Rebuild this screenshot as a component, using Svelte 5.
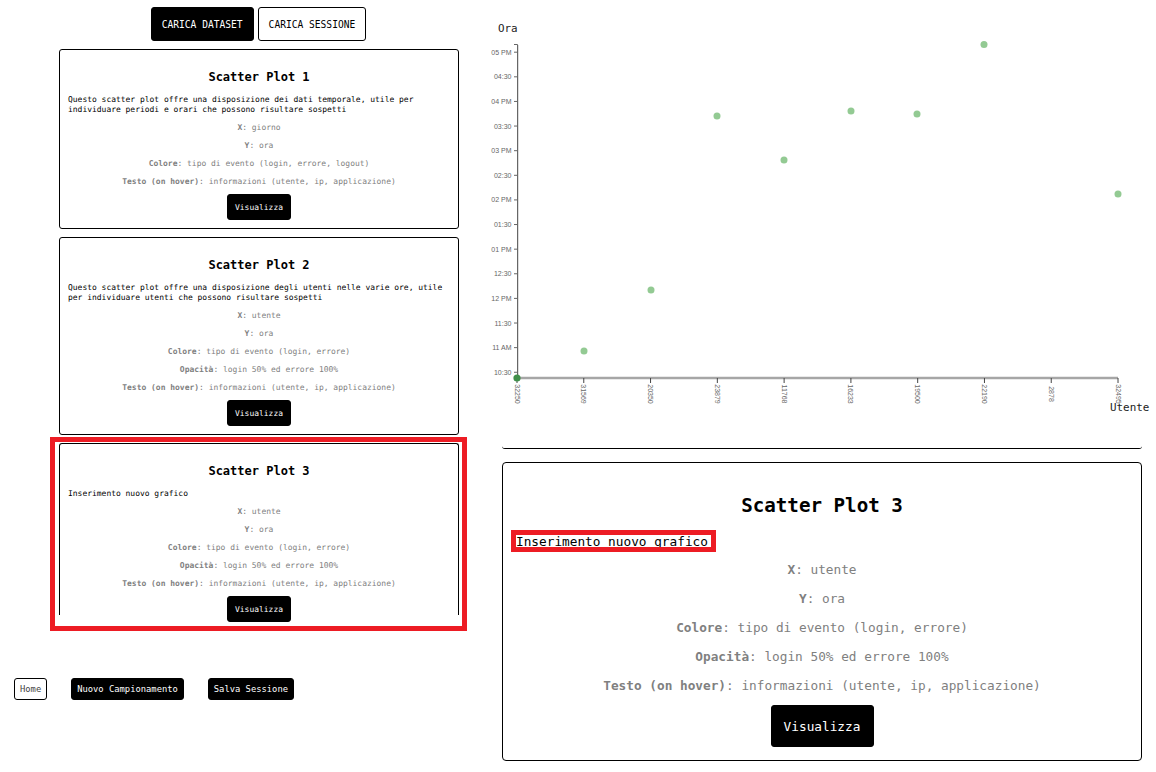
<script>
  const plots = [
    {
      title: 'Scatter Plot 1',
      text: 'Questo scatter plot offre una disposizione dei dati temporale, utile per individuare periodi e orari che possono risultare sospetti',
      rows: [['X', 'giorno'], ['Y', 'ora'], ['Colore', 'tipo di evento (login, errore, logout)'], ['Testo (on hover)', 'informazioni (utente, ip, applicazione)']]
    },
    {
      title: 'Scatter Plot 2',
      text: 'Questo scatter plot offre una disposizione degli utenti nelle varie ore, utile per individuare utenti che possono risultare sospetti',
      rows: [['X', 'utente'], ['Y', 'ora'], ['Colore', 'tipo di evento (login, errore)'], ['Opacità', 'login 50% ed errore 100%'], ['Testo (on hover)', 'informazioni (utente, ip, applicazione)']]
    }
  ];
  const third = {
    title: 'Scatter Plot 3',
    text: 'Inserimento nuovo grafico',
    rows: [['X', 'utente'], ['Y', 'ora'], ['Colore', 'tipo di evento (login, errore)'], ['Opacità', 'login 50% ed errore 100%'], ['Testo (on hover)', 'informazioni (utente, ip, applicazione)']]
  };
  const yLabels = ['05 PM', '04:30', '04 PM', '03:30', '03 PM', '02:30', '02 PM', '01:30', '01 PM', '12:30', '12 PM', '11:30', '11 AM', '10:30'];
  const xLabels = ['32250', '31569', '20350', '23879', '11768', '16233', '19500', '22190', '2878', '32495'];
  const points = [[584, 351], [651, 290], [717, 116], [784, 160], [851, 111], [917, 114], [984, 44.4], [1118, 194]];
  const yAt = (i) => 52.2 + i * 24.62;
  const xAt = (i) => 517 + i * 66.78;
</script>

<div class="page">
  <section class="left">
    <div class="toolbar">
      <button class="btn dark">CARICA DATASET</button>
      <button class="btn light">CARICA SESSIONE</button>
    </div>

    {#each plots as plot}
      <article class="card">
        <h2>{plot.title}</h2>
        <p class="intro">{plot.text}</p>
        {#each plot.rows as row}
          <p class="row"><b>{row[0]}</b>: {row[1]}</p>
        {/each}
        <button class="show">Visualizza</button>
      </article>
    {/each}

    <div class="marked">
      <article class="card cut">
        <h2>{third.title}</h2>
        <p class="intro">{third.text}</p>
        {#each third.rows as row}
          <p class="row"><b>{row[0]}</b>: {row[1]}</p>
        {/each}
        <button class="show">Visualizza</button>
      </article>
      <div class="red-card"></div>
    </div>

    <nav class="nav">
      <button class="nav-btn light home">Home</button>
      <button class="nav-btn dark">Nuovo Campionamento</button>
      <button class="nav-btn dark">Salva Sessione</button>
    </nav>
  </section>

  <section class="right">
    <div class="chart">
      <svg width="666" height="440" viewBox="490 0 666 440">
        <text class="axis-title" x="498" y="32">Ora</text>
        <text class="axis-title" x="1110" y="411">Utente</text>

        <path d="M514 44.5H517.5V378" fill="none" stroke="#666" stroke-width="1" />
        <line x1="518.5" y1="45" x2="518.5" y2="377" stroke="#ddd" />
        <line x1="517" y1="378" x2="1118" y2="378" stroke="#a6a6a6" stroke-width="2.4" />

        {#each yLabels as label, i}
          <line x1="514" x2="517" y1={yAt(i)} y2={yAt(i)} stroke="#666" />
          <text class="tick" x="511.5" y={yAt(i) + 2.5} text-anchor="end">{label}</text>
        {/each}

        {#each xLabels as label, i}
          <line x1={xAt(i)} x2={xAt(i)} y1="378" y2="383" stroke="#444" />
          <text class="tick" text-anchor="middle" transform="translate({xAt(i)} 394) rotate(90)" dy="2.5">{label}</text>
        {/each}

        <circle cx="517" cy="378" r="3.6" fill="#3f8f4a" />
        {#each points as p}
          <circle cx={p[0]} cy={p[1]} r="3.5" fill="#93ca93" />
        {/each}
      </svg>
    </div>

    <article class="detail">
      <h1>{third.title}</h1>
      <p class="lead">
        {third.text}
        <span class="red-text"></span>
      </p>
      {#each third.rows as row}
        <p class="line"><b>{row[0]}</b>: {row[1]}</p>
      {/each}
      <button class="show big">Visualizza</button>
    </article>
  </section>
</div>

<style>
  :global(body) {
    margin: 0;
    background: #fff;
  }
  .page {
    display: grid;
    grid-template-columns: 502px 640px;
    width: 1156px;
    height: 772px;
    overflow: hidden;
    font-family: "DejaVu Sans Mono", "Liberation Mono", monospace;
    color: #000;
  }
  button {
    font-family: inherit;
    box-sizing: border-box;
    border: 1px solid #000;
    border-radius: 3px;
    white-space: nowrap;
    padding: 0;
    cursor: pointer;
  }
  .dark {
    background: #000;
    color: #fff;
  }
  .light {
    background: #fff;
    color: #000;
  }
  .left {
    display: flex;
    flex-direction: column;
  }
  .toolbar {
    display: flex;
    justify-content: center;
    gap: 4px;
    width: 399px;
    margin: 7px 0 0 59px;
  }
  .btn {
    height: 34px;
    padding: 0 10px;
    font-size: 9.6px;
  }
  .card {
    box-sizing: border-box;
    width: 400px;
    margin: 8px 0 0 59px;
    padding: 20px 8px 8px;
    border: 1px solid #000;
    border-radius: 3px;
    text-align: center;
  }
  .card h2 {
    margin: 0;
    font-size: 12px;
    line-height: 14px;
    font-weight: 700;
  }
  .intro {
    margin: 11px 0 0;
    font-size: 7.97px;
    line-height: 10px;
    text-align: left;
  }
  .row {
    margin: 8px 0 0;
    font-size: 7.97px;
    line-height: 10px;
    color: #808080;
  }
  .row b,
  .line b {
    font-weight: 700;
    color: #808080;
  }
  .show {
    display: block;
    width: 64px;
    height: 26px;
    margin: 7px auto 0;
    background: #000;
    color: #fff;
    font-size: 7.97px;
  }
  .marked {
    position: relative;
    margin-top: 8px;
    margin-left: 59px;
    width: 400px;
  }
  .card.cut {
    margin: 0;
    height: 172px;
    border-bottom: 0;
    border-radius: 3px 3px 0 0;
  }
  .red-card {
    position: absolute;
    left: -9px;
    top: -6px;
    width: 417px;
    height: 194px;
    box-sizing: border-box;
    border: 5px solid #ed1c24;
  }
  .nav {
    display: flex;
    gap: 24px;
    margin: 63px 0 0 14px;
  }
  .nav-btn {
    height: 22px;
    padding: 0 5px;
    font-size: 8.8px;
  }
  .home {
    color: #444;
  }
  .right {
    display: flex;
    flex-direction: column;
  }
  .chart {
    box-sizing: border-box;
    height: 449px;
    border-bottom: 1px solid #000;
    border-radius: 0 0 3px 3px;
  }
  .chart svg {
    display: block;
    margin-left: -12px;
    overflow: visible;
  }
  .axis-title {
    font-size: 10.9px;
    fill: #222;
  }
  .tick {
    font-family: "Liberation Sans", Arial, sans-serif;
    font-size: 7px;
    fill: #666;
  }
  .detail {
    box-sizing: border-box;
    height: 299px;
    margin-top: 13px;
    padding: 32px 13px 0;
    border: 1px solid #000;
    border-radius: 4px;
    text-align: center;
  }
  .detail h1 {
    margin: 0;
    font-size: 19.2px;
    line-height: 22.4px;
    font-weight: 700;
  }
  .lead {
    position: relative;
    margin: 17px 0 0;
    font-size: 12.75px;
    line-height: 16px;
    text-align: left;
  }
  .red-text {
    position: absolute;
    left: -5px;
    top: -4.4px;
    width: 205px;
    height: 22px;
    box-sizing: border-box;
    border: 5px solid #ed1c24;
  }
  .line {
    margin: 12px 0 0;
    font-size: 12.75px;
    line-height: 16px;
    color: #808080;
  }
  .line + .line {
    margin-top: 13px;
  }
  .show.big {
    width: 103px;
    height: 42px;
    margin-top: 11px;
    font-size: 12.75px;
  }
</style>
